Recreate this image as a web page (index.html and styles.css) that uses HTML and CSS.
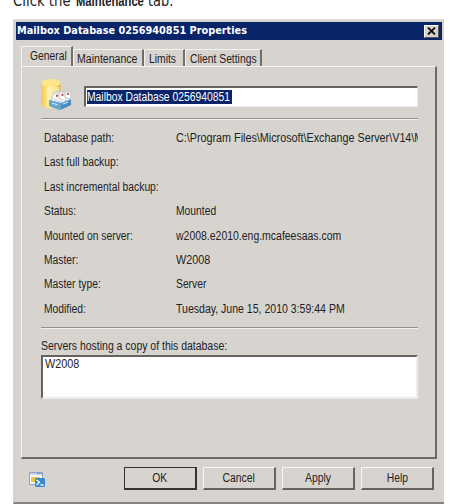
FILE: index.html
```html
<!DOCTYPE html>
<html lang="en">
<head>
<meta charset="utf-8">
<title>Mailbox Database Properties</title>
<link rel="stylesheet" href="styles.css">
</head>
<body>
<p class="step"><span>Click the</span> <b>Maintenance</b> <span>tab.</span></p>
<main class="dialog">
  <header class="titlebar">
    <h1>Mailbox Database 0256940851 Properties</h1>
    <button class="close" aria-label="Close"><svg width="9" height="8" viewBox="0 0 9 8"><path d="M1 .5 8 7.5M8 .5 1 7.5" stroke="#111" stroke-width="1.8"/></svg></button>
  </header>
  <nav class="tabs">
    <div class="tab active"><span class="t">General</span></div>
    <div class="tab maint"><span class="t">Maintenance</span></div>
    <div class="tab limits"><span class="t">Limits</span></div>
    <div class="tab client"><span class="t">Client Settings</span></div>
  </nav>
  <section class="panel">
    <div class="name-row">
      <svg class="db" width="34" height="34" viewBox="0 0 34 34">
        <defs>
          <linearGradient id="gold"><stop stop-color="#f8c64d"/><stop offset=".4" stop-color="#fff0a0"/><stop offset="1" stop-color="#edb53f"/></linearGradient>
          <linearGradient id="tray" x2="1" y2="1"><stop stop-color="#75b6dc"/><stop offset="1" stop-color="#3275ad"/></linearGradient>
        </defs>
        <path d="M.5 4v21c0 5 18 6 19 1V4z" fill="url(#gold)"/>
        <ellipse cx="10" cy="4" rx="9.5" ry="4" fill="#ffe68a"/>
        <path d="M6 8h12v14H6z" fill="#fff4b5" opacity=".65"/>
        <path d="m10 20 3-7 17-1-1 10-16 4z" fill="#edf1f5" stroke="#b6c0cb" stroke-width=".7"/>
        <path d="m11 19 1-4 6-1 2 9zM17 19l1-5 6-1 1 9zM23 18l1-5 5-1 1 8z" fill="#fff" stroke="#b8c1cd" stroke-width=".6"/>
        <path d="m15 17 2-.5M20.500 16l2-.5M26 15l2-.5" stroke="#d6453e" stroke-width="2.2"/>
        <path d="m8 21 12 3 10-4v6l-11 5-11-4z" fill="url(#tray)"/>
        <path d="m8 21 12 3v7l-12-4z" fill="#65a8ce"/>
        <path d="m11 24 6 2M22 25l5-2" stroke="#c7e6f4" stroke-width="1.3"/>
      </svg>
      <div class="field"><mark><span class="t">Mailbox Database 0256940851</span></mark></div>
    </div>
    <hr>
    <dl class="details">
      <dt><span class="t">Database path:</span></dt><dd><span class="t path">C:\Program Files\Microsoft\Exchange Server\V14\M</span></dd>
      <dt><span class="t">Last full backup:</span></dt><dd></dd>
      <dt><span class="t">Last incremental backup:</span></dt><dd></dd>
      <dt><span class="t">Status:</span></dt><dd><span class="t">Mounted</span></dd>
      <dt><span class="t">Mounted on server:</span></dt><dd><span class="t host">w2008.e2010.eng.mcafeesaas.com</span></dd>
      <dt><span class="t">Master:</span></dt><dd><span class="t wide">W2008</span></dd>
      <dt><span class="t">Master type:</span></dt><dd><span class="t">Server</span></dd>
      <dt><span class="t">Modified:</span></dt><dd><span class="t date">Tuesday, June 15, 2010 3:59:44 PM</span></dd>
    </dl>
    <hr>
    <div class="list-label"><span class="t host">Servers hosting a copy of this database:</span></div>
    <div class="listbox"><span class="t wide">W2008</span></div>
  </section>
  <footer class="actions">
    <svg class="script" width="16" height="17" viewBox="0 0 16 17">
      <path d="M.5 1.5h13v12H.5z" fill="#f7f8fb" stroke="#8da2c8"/>
      <path d="M1 2h12v2H1z" fill="#c5d4ee"/><path d="M8 2.5h1M10 2.5h1M12 2.5h1" stroke="#667eb4"/>
      <path d="M2 6h9v5H2z" fill="#ebcb3e"/>
      <rect x="6" y="7" width="10" height="9" rx="1.5" fill="#3489cf"/>
      <path d="m7.5 9 3 2.3-3 2.7M11.5 14h3" fill="none" stroke="#fff" stroke-width="1.3"/>
    </svg>
    <button class="btn default"><span class="t">OK</span></button>
    <button class="btn"><span class="t">Cancel</span></button>
    <button class="btn"><span class="t">Apply</span></button>
    <button class="btn"><span class="t">Help</span></button>
  </footer>
</main>
</body>
</html>
```
FILE: styles.css
```css
* { box-sizing: border-box; }
body { margin: 0; width: 450px; height: 504px; overflow: hidden; background: #fff; color: #222; font: 12px/14px "Liberation Sans", Arial, sans-serif; }
h1, p, dl, dd { margin: 0; }
button { font: inherit; color: inherit; padding: 0; }
.t { display: inline-block; white-space: nowrap; transform: scaleX(.86); transform-origin: left center; }
.t.host { transform: scaleX(.872); }
.t.date { transform: scaleX(.878); }
.t.wide { transform: scaleX(.9); }
.t.path { transform: scaleX(.898); }
.step { display: flex; gap: 5px; height: 19px; margin: -8px 0 8px 13px; font: 15px/18px "DejaVu Sans", Verdana, sans-serif; white-space: nowrap; }
.step b { font: bold 14px/18px "Liberation Sans", Arial, sans-serif; width: 67px; transform: scaleX(.8); transform-origin: left; }
.step span { transform: scaleX(.86); transform-origin: left; }
.step span:first-child { width: 58px; transform: scaleX(.885); }
.dialog { width: 431px; height: 485px; margin-left: 13px; padding: 2px; background: #d7d4cf; border-top: 1px solid #e0dedb; border-left: 1px solid #d7d4cf; border-bottom: 2px solid #85827f; }
.titlebar { display: flex; justify-content: space-between; align-items: center; height: 18px; padding: 0 3px 0 1px; background: #0a246a; color: #fff; }
.titlebar h1 { font: bold 11px/18px "DejaVu Sans", Verdana, sans-serif; white-space: nowrap; transform: scaleX(.885); transform-origin: left; }
.close { display: grid; place-items: center; width: 15px; height: 13px; background: #d7d4cf; border: 1px solid; border-color: #fff #555 #555 #fff; }
.tabs { display: flex; align-items: flex-end; height: 26px; padding-left: 5px; }
.tab { height: 17px; padding: 2px 0 0 4px; border-top: 1px solid #f3f2ef; border-left: 1px solid #f3f2ef; border-right: 2px solid #716e6b; }
.tab.active { width: 52px; height: 20px; padding: 2px 0 0 8px; }
.maint { width: 71px; padding-left: 3px; }
.maint .t { transform: scaleX(.88); }
.limits { width: 41px; }
.client { width: 77px; }
.panel { width: 416px; height: 393px; margin-left: 5px; padding: 12px 17px 0 19px; border: 1px solid #f3f2ef; border-right: 2px solid #6b6866; border-bottom: 2px solid #6b6866; }
.name-row { display: flex; align-items: flex-start; height: 39px; }
.field { width: 334px; height: 21px; margin: 7px 0 0 9px; padding: 2px 0 2px 1px; background: #fff; border: 1px solid #eee; border-top: 2px solid #65625f; border-left: 2px solid #65625f; }
mark { display: block; width: 145px; height: 14px; background: #0a246a; color: #fff; }
hr { margin: 0; height: 2px; border: 0; border-top: 1px solid #94918d; background: #f2f0ed; }
.details { display: grid; grid-template-columns: 132px 1fr; grid-auto-rows: 24.4px; height: 207px; padding: 11px 0 0 3px; }
dd { overflow: hidden; height: 16px; }
.list-label { padding-top: 10px; height: 26px; }
.listbox { height: 44px; padding: 0 2px; background: #fff; border: 2px solid #eeecea; border-top-color: #65625f; border-left-color: #65625f; }
.actions { display: flex; gap: 6px; padding: 8px 0 0 13px; height: 33px; }
.script { margin: 4px 73px 0 0; }
.btn { width: 73px; height: 23px; background: #d7d4cf; border: 1px solid; border-color: #f8f7f5 #65625f #65625f #f8f7f5; border-right-width: 2px; border-bottom-width: 2px; text-align: center; }
.btn .t { transform-origin: center; }
.btn.default { border-color: #333; }
```
